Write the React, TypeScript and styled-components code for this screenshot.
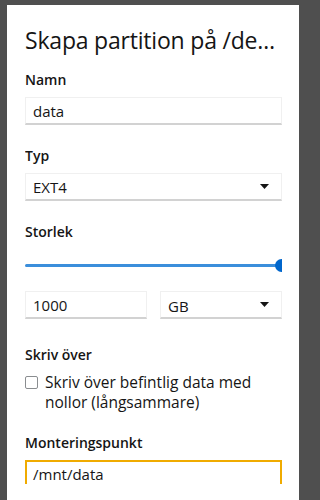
import styled, { createGlobalStyle } from "styled-components";

const GlobalStyle = createGlobalStyle`
  html, body {
    margin: 0;
    padding: 0;
    background: #4f4f4f;
    font-family: "Open Sans", "Noto Sans", sans-serif;
    color: #151515;
  }
  * {
    box-sizing: border-box;
  }
`;

const Modal = styled.div`
  margin: 5px 7px 0 7px;
  width: 292px;
  height: 495px;
  background: #fff;
  display: flex;
  flex-direction: column;
  padding: 21px 17px 0 18px;
`;

const Title = styled.h1`
  margin: 0;
  font-size: 23px;
  font-weight: 400;
  line-height: 29px;
  white-space: nowrap;
  overflow: hidden;
  text-overflow: ellipsis;
  letter-spacing: -0.2px;
`;

const Body = styled.div`
  margin-top: 14px;
  height: 415px;
  overflow: hidden;
  display: flex;
  flex-direction: column;
  gap: 20px;
`;

const Group = styled.div<{ $extra?: number }>`
  display: flex;
  flex-direction: column;
  gap: 7px;
  margin-top: ${(p) => p.$extra ?? 0}px;
`;

const Label = styled.label`
  font-size: 14px;
  font-weight: 600;
  line-height: 21px;
`;

const Field = styled.div<{ $warn?: boolean }>`
  position: relative;
  flex: none;
  height: ${(p) => (p.$warn ? 36 : 28)}px;
  border: ${(p) => (p.$warn ? "2px solid #f0ab00" : "1px solid #f0f0f0")};
  border-bottom: 2px solid ${(p) => (p.$warn ? "#f0ab00" : "#d2d2d2")};
  display: flex;
  align-items: ${(p) => (p.$warn ? "flex-start" : "center")};
  padding: ${(p) => (p.$warn ? "2px 6px 0" : "0 7px")};
  font-size: 15px;
  line-height: ${(p) => (p.$warn ? 20 : 22)}px;
`;

const Caret = styled.svg`
  position: absolute;
  right: 12px;
  top: 50%;
  margin-top: -3px;
`;

const Row = styled.div`
  display: grid;
  grid-template-columns: 1fr 1fr;
  gap: 13px;
`;

const SliderWrap = styled.div`
  position: relative;
  height: 14px;
  margin: 10px 0 11px;
`;

const Track = styled.div`
  position: absolute;
  left: 0;
  right: 0;
  top: 5px;
  height: 3px;
  border-radius: 2px;
  background: #3b8edb;
`;

const Thumb = styled.div`
  position: absolute;
  right: -6px;
  top: 0;
  width: 13px;
  height: 13px;
  border-radius: 50%;
  background: #0066cc;
`;

const CheckRow = styled.div`
  display: flex;
  gap: 7px;
  align-items: flex-start;
`;

const Box = styled.span`
  flex: none;
  width: 13px;
  height: 13px;
  margin-top: 4px;
  border: 1px solid #8a8d90;
  border-radius: 2px;
`;

const CheckText = styled.span`
  font-size: 15.5px;
  line-height: 20px;
`;

const UnitText = styled.span`
  margin-top: 3px;
`;

const DropCaret = () => (
  <Caret width="9" height="5" viewBox="0 0 9 5">
    <path d="M0 0h9L4.5 5z" fill="#151515" />
  </Caret>
);

export default function App() {
  return (
    <>
      <GlobalStyle />
      <Modal>
        <Title>Skapa partition på /dev/sda</Title>
        <Body>
          <Group>
            <Label>Namn</Label>
            <Field>data</Field>
          </Group>
          <Group>
            <Label>Typ</Label>
            <Field>
              EXT4
              <DropCaret />
            </Field>
          </Group>
          <Group>
            <Label>Storlek</Label>
            <SliderWrap>
              <Track />
              <Thumb />
            </SliderWrap>
            <Row>
              <Field>1000</Field>
              <Field>
                <UnitText>GB</UnitText>
                <DropCaret />
              </Field>
            </Row>
          </Group>
          <Group $extra={5}>
            <Label>Skriv över</Label>
            <CheckRow>
              <Box />
              <CheckText>Skriv över befintlig data med nollor (långsammare)</CheckText>
            </CheckRow>
          </Group>
          <Group>
            <Label>Monteringspunkt</Label>
            <Field $warn>/mnt/data</Field>
          </Group>
        </Body>
      </Modal>
    </>
  );
}
